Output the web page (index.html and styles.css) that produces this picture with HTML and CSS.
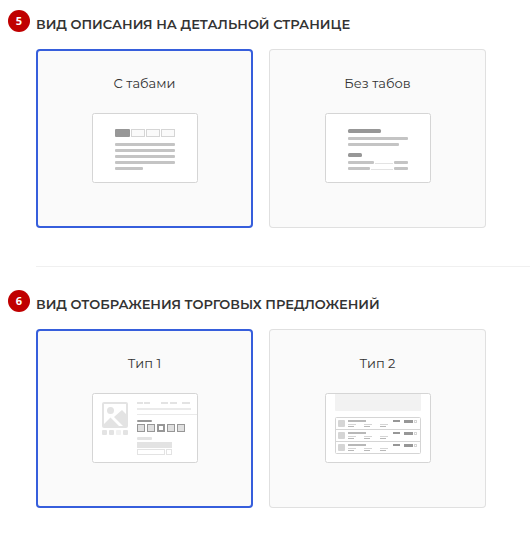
FILE: index.html
```html
<!DOCTYPE html>
<html lang="ru">
<head>
<meta charset="utf-8">
<meta name="viewport" content="width=device-width, initial-scale=1">
<title>Настройки</title>
<link rel="stylesheet" href="styles.css">
</head>
<body>
<main>
  <fieldset class="setting">
    <legend class="setting-title"><span class="badge">5</span>ВИД ОПИСАНИЯ НА ДЕТАЛЬНОЙ СТРАНИЦЕ</legend>
    <div class="options">
      <label class="option">
        <input type="radio" name="description" checked>
        <span class="option-name">С табами</span>
        <svg class="preview" viewBox="0 0 107 70" aria-hidden="true">
          <rect class="frame" x="1.5" y=".5" width="105" height="69" rx="2"/>
          <rect class="dark" x="24" y="16" width="15" height="8" rx="1"/>
          <g class="outline"><rect x="40.5" y="16.5" width="13" height="7"/><rect x="55.5" y="16.5" width="13" height="7"/><rect x="70.5" y="16.5" width="13" height="7"/></g>
          <g class="mid"><rect x="24" y="30" width="60" height="3" rx="1"/><rect x="24" y="36" width="60" height="3" rx="1"/><rect x="24" y="42" width="60" height="3" rx="1"/><rect x="24" y="48" width="60" height="3" rx="1"/><rect x="24" y="54" width="28" height="3" rx="1"/></g>
        </svg>
      </label>
      <label class="option">
        <input type="radio" name="description">
        <span class="option-name">Без табов</span>
        <svg class="preview" viewBox="0 0 107 70" aria-hidden="true">
          <rect class="frame" x="1.5" y=".5" width="105" height="69" rx="2"/>
          <g class="dark"><rect x="24" y="16" width="33" height="4" rx="1.5"/><rect x="24" y="40" width="14" height="4" rx="1.5"/></g>
          <g class="mid"><rect x="24" y="24" width="60" height="3" rx="1"/><rect x="24" y="30" width="51" height="3" rx="1"/><rect x="24" y="48" width="26" height="3" rx="1"/><rect x="70" y="48" width="14" height="3" rx="1"/><rect x="24" y="54" width="22" height="3" rx="1"/><rect x="70" y="54" width="14" height="3" rx="1"/></g>
          <path class="light" d="M51 50h18v1H51zM47 56h22v1H47z"/>
        </svg>
      </label>
    </div>
  </fieldset>

  <fieldset class="setting">
    <legend class="setting-title"><span class="badge">6</span>ВИД ОТОБРАЖЕНИЯ ТОРГОВЫХ ПРЕДЛОЖЕНИЙ</legend>
    <div class="options">
      <label class="option">
        <input type="radio" name="offers" checked>
        <span class="option-name">Тип 1</span>
        <svg class="preview" viewBox="0 0 107 70" aria-hidden="true">
          <rect class="frame" x="1.5" y=".5" width="105" height="69" rx="2"/>
          <rect x="12" y="10" width="24" height="24" rx="1" fill="#fff" stroke="#e3e3e3" stroke-width="2"/>
          <g class="light">
            <circle cx="19.5" cy="17.500" r="3.500"/>
            <path d="M12 32l7.500-7.500 9.500 9.500H12zM23 24l8-7 5 5v12h-3z"/>
            <rect x="11" y="37" width="5" height="5" rx="1"/><rect x="18" y="37" width="5" height="5" rx="1"/><rect x="25" y="37" width="5" height="5" rx="1" opacity=".5"/><rect x="32" y="37" width="5" height="5" rx="1"/>
            <path d="M46 9h6v2h-6zM53 9h6v2h-6zM70 9h7v2h-7zM79 9h7v2h-7zM91 9h8v2h-8z"/>
            <path d="M46 15h54v2H46zM46 21h60v1H46z" opacity=".75"/>
            <rect x="46" y="44" width="15" height="3" rx="1"/><rect x="46" y="49" width="35" height="6"/>
          </g>
          <rect class="dark" x="46" y="27" width="15" height="2" rx="1"/>
          <g class="swatch"><rect x="46.500" y="31.500" width="7" height="7"/><rect x="56.500" y="31.500" width="7" height="7"/><rect x="76.500" y="31.500" width="7" height="7"/><rect x="86.500" y="31.500" width="7" height="7"/></g>
          <rect x="67" y="32" width="6" height="6" fill="#fff" stroke="#979797" stroke-width="2"/>
          <g fill="#fff" stroke="#e3e3e3"><rect x="46.500" y="56.500" width="27" height="5"/><rect x="75.500" y="56.500" width="5" height="5"/></g>
        </svg>
      </label>
      <label class="option">
        <input type="radio" name="offers">
        <span class="option-name">Тип 2</span>
        <svg class="preview" viewBox="0 0 107 70" aria-hidden="true">
          <defs>
            <g id="offer">
              <rect x="14" y="3" width="7" height="7" rx="1" fill="#d5d5d5"/>
              <path fill="#b8b8b8" d="M24 3h18v2H24zM24 9h6v1h-6zM40 9h6v1h-6zM56 9h6v1h-6z"/>
              <path fill="#d5d5d5" d="M24 7h8v1h-8zM40 7h8v1h-8zM56 7h8v1h-8z"/>
              <path class="dark" d="M69 3h7v2h-7zM80 3h9v3h-9z"/>
              <rect x="90.500" y="3.500" width="2" height="2" fill="#fff" stroke="#d5d5d5"/>
            </g>
          </defs>
          <rect class="frame" x="1.5" y=".5" width="105" height="69" rx="2"/>
          <path d="M11 1h86v16q0 1-1 1H12q-1 0-1-1z" fill="#f2f2f2"/>
          <rect x="11.500" y="24.500" width="85" height="36" rx="1" fill="#fff" stroke="#d5d5d5"/>
          <path fill="#d5d5d5" d="M12 36h84v1H12zM12 48h84v1H12z"/>
          <use href="#offer" y="24"/><use href="#offer" y="36"/><use href="#offer" y="48"/>
        </svg>
      </label>
    </div>
  </fieldset>
</main>
</body>
</html>
```
FILE: styles.css
```css
* {
  box-sizing: border-box;
}

body {
  margin: 0;
  background: #fff;
  color: #333;
  font-family: Montserrat, "Open Sans", sans-serif;
}

.setting {
  position: relative;
  min-width: 0;
  margin: 0 0 0 36px;
  padding: 0 44px 38px 0;
  border: 0;
}

.setting + .setting {
  padding-top: 13px;
  border-top: 1px solid #f0f0f0;
}

.setting-title {
  position: relative;
  float: left;
  width: 100%;
  padding: 14px 0 15px;
  font-size: 13px;
  font-weight: 600;
  line-height: 20px;
}

.badge {
  position: absolute;
  top: 10px;
  left: -28px;
  width: 22px;
  height: 22px;
  border-radius: 50%;
  background: #c00000;
  color: #fff;
  font-family: "Open Sans", sans-serif;
  font-size: 11px;
  font-weight: 700;
  line-height: 22px;
  text-align: center;
}

.options {
  clear: both;
  display: grid;
  grid-template-columns: 1fr 1fr;
  gap: 16px;
}

.option {
  position: relative;
  display: flex;
  flex-direction: column;
  align-items: center;
  gap: 20px;
  padding: 24px 0 45px;
  border-radius: 4px;
  background: #fafafa;
  box-shadow: inset 0 0 0 1px #e0e0e0;
  cursor: pointer;
}

.option:has(input:checked) {
  box-shadow: inset 0 0 0 2px #365edc;
}

.option input {
  position: absolute;
  inset: 0;
  margin: 0;
  opacity: 0;
}

.option-name {
  font-size: 13px;
  line-height: 20px;
}

.preview {
  width: 107px;
  height: 70px;
}

.frame {
  fill: #fff;
  stroke: #d5d5d5;
}

.dark {
  fill: #979797;
}

.mid {
  fill: #c4c4c4;
}

.light {
  fill: #e3e3e3;
}

.outline {
  fill: #fafafa;
  stroke: #d5d5d5;
}

.swatch {
  fill: #e0e0e0;
  stroke: #979797;
}
```
